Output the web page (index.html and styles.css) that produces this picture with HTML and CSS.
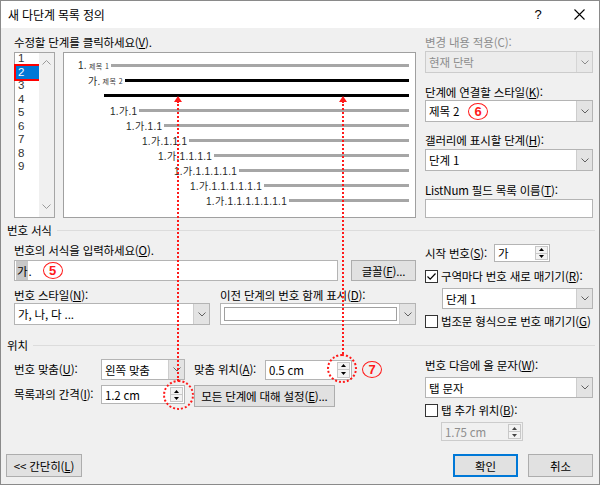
FILE: index.html
```html
<!DOCTYPE html>
<html lang="ko">
<head>
<meta charset="utf-8">
<title>새 다단계 목록 정의</title>
<link rel="stylesheet" href="styles.css">
</head>
<body>
<div class="dialog">
  <div class="titlebar">
    <span class="title">새 다단계 목록 정의</span>
    <span class="tb-help">?</span>
    <span class="tb-close"><svg width="11" height="11" viewBox="0 0 11 11"><path d="M0.5 0.5 L10.5 10.5 M10.5 0.5 L0.5 10.5" stroke="#000" stroke-width="1.1" fill="none"/></svg></span>
  </div>

  <div class="content">
    <div class="cols top">
      <div class="col">
        <div class="lbl">수정할 단계를 클릭하세요(<u>V</u>).</div>
        <div class="levels-row">
          <div class="listbox">
            <ul class="items">
              <li>1</li>
              <li class="sel">2</li>
              <li>3</li>
              <li>4</li>
              <li>5</li>
              <li>6</li>
              <li>7</li>
              <li>8</li>
              <li>9</li>
            </ul>
            <div class="vscroll">
              <svg width="9" height="5" viewBox="0 0 9 5"><polyline points="0.5,4.5 4.5,0.5 8.5,4.5" fill="none" stroke="#9a9a9a" stroke-width="1"/></svg>
              <svg width="9" height="5" viewBox="0 0 9 5"><polyline points="0.5,0.5 4.5,4.5 8.5,0.5" fill="none" stroke="#9a9a9a" stroke-width="1"/></svg>
            </div>
          </div>
          <div class="preview">
            <div class="prow r1"><span class="num">1.</span><span class="tiny">제목 1</span><span class="bar"></span></div>
            <div class="prow r2"><span class="num">가.</span><span class="tiny">제목 2</span><span class="bar dark"></span></div>
            <div class="prow r3"><span class="bar dark"></span></div>
            <div class="prow r4"><span class="num">1.가.1</span><span class="bar"></span></div>
            <div class="prow r5"><span class="num">1.가.1.1</span><span class="bar"></span></div>
            <div class="prow r6"><span class="num">1.가.1.1.1</span><span class="bar"></span></div>
            <div class="prow r7"><span class="num">1.가.1.1.1.1</span><span class="bar"></span></div>
            <div class="prow r8"><span class="num">1.가.1.1.1.1.1</span><span class="bar"></span></div>
            <div class="prow r9"><span class="num">1.가.1.1.1.1.1.1</span><span class="bar"></span></div>
            <div class="prow r10"><span class="num">1.가.1.1.1.1.1.1.1</span><span class="bar"></span></div>
          </div>
        </div>
      </div>

      <div class="col">
        <div class="lbl disabled">변경 내용 적용(C):</div>
        <div class="combo disabled m1">
          <span class="val">현재 단락</span>
          <span class="arrow"><svg width="8" height="5" viewBox="0 0 8 5"><polyline points="0.5,0.5 4,4 7.5,0.5" fill="none" stroke="#8a8a8a" stroke-width="1"/></svg></span>
        </div>
        <div class="lbl m11">단계에 연결할 스타일(<u>K</u>):</div>
        <div class="combo">
          <span class="val">제목 2<span class="badge b6">6</span></span>
          <span class="arrow"><svg width="8" height="5" viewBox="0 0 8 5"><polyline points="0.5,0.5 4,4 7.5,0.5" fill="none" stroke="#606060" stroke-width="1"/></svg></span>
        </div>
        <div class="lbl m10">갤러리에 표시할 단계(<u>H</u>):</div>
        <div class="combo m1">
          <span class="val">단계 1</span>
          <span class="arrow"><svg width="8" height="5" viewBox="0 0 8 5"><polyline points="0.5,0.5 4,4 7.5,0.5" fill="none" stroke="#606060" stroke-width="1"/></svg></span>
        </div>
        <div class="lbl m11">ListNum 필드 목록 이름(<u>T</u>):</div>
        <div class="textbox m1 h19"></div>
      </div>
    </div>

    <div class="group-head g1"><span>번호 서식</span><i></i></div>

    <div class="cols fmt">
      <div class="col">
        <div class="lbl m4">번호의 서식을 입력하세요(<u>O</u>).</div>
        <div class="fmt-row">
          <div class="textbox fmt-input"><span class="hl">가</span>.<span class="badge b5">5</span></div>
          <button class="btn font-btn">글꼴(<u>F</u>)...</button>
        </div>
        <div class="two-labels">
          <div class="lbl">번호 스타일(<u>N</u>):</div>
          <div class="lbl">이전 단계의 번호 함께 표시(<u>D</u>):</div>
        </div>
        <div class="two-combos">
          <div class="combo">
            <span class="val">가, 나, 다 ...</span>
            <span class="arrow"><svg width="8" height="5" viewBox="0 0 8 5"><polyline points="0.5,0.5 4,4 7.5,0.5" fill="none" stroke="#606060" stroke-width="1"/></svg></span>
          </div>
          <div class="combo">
            <span class="val"><span class="inner"></span></span>
            <span class="arrow"><svg width="8" height="5" viewBox="0 0 8 5"><polyline points="0.5,0.5 4,4 7.5,0.5" fill="none" stroke="#606060" stroke-width="1"/></svg></span>
          </div>
        </div>
      </div>

      <div class="col">
        <div class="start-row">
          <span class="lbl start-lbl">시작 번호(<u>S</u>):</span>
          <div class="spin start-spin">
            <span class="val">가</span>
            <span class="btns">
              <span class="sb"><svg width="5" height="3" viewBox="0 0 5 3"><polygon points="2.5,0 5,3 0,3" fill="#000"/></svg></span>
              <span class="sb"><svg width="5" height="3" viewBox="0 0 5 3"><polygon points="0,0 5,0 2.5,3" fill="#000"/></svg></span>
            </span>
          </div>
        </div>
        <div class="check-row m6">
          <span class="cb"><svg width="11" height="11" viewBox="0 0 11 11"><polyline points="1.5,5.5 4.2,8.2 9.5,2.5" fill="none" stroke="#000" stroke-width="1.2"/></svg></span>
          <span>구역마다 번호 새로 매기기(<u>R</u>):</span>
        </div>
        <div class="combo h21 m4 indent">
          <span class="val">단계 1</span>
          <span class="arrow"><svg width="8" height="5" viewBox="0 0 8 5"><polyline points="0.5,0.5 4,4 7.5,0.5" fill="none" stroke="#606060" stroke-width="1"/></svg></span>
        </div>
        <div class="check-row m4">
          <span class="cb"></span>
          <span>법조문 형식으로 번호 매기기(<u>G</u>)</span>
        </div>
      </div>
    </div>

    <div class="group-head g2"><span>위치</span><i></i></div>

    <div class="cols pos">
      <div class="col">
        <div class="pos-row1">
          <span class="lbl plabel">번호 맞춤(<u>U</u>):</span>
          <div class="combo h21 align-combo">
            <span class="val">왼쪽 맞춤</span>
            <span class="arrow"><svg width="8" height="5" viewBox="0 0 8 5"><polyline points="0.5,0.5 4,4 7.5,0.5" fill="none" stroke="#606060" stroke-width="1"/></svg></span>
          </div>
          <span class="lbl plabel2">맞춤 위치(<u>A</u>):</span>
          <div class="spin h20 pos-spin">
            <span class="val">0.5 cm</span>
            <span class="btns">
              <span class="sb"><svg width="5" height="3" viewBox="0 0 5 3"><polygon points="2.5,0 5,3 0,3" fill="#000"/></svg></span>
              <span class="sb"><svg width="5" height="3" viewBox="0 0 5 3"><polygon points="0,0 5,0 2.5,3" fill="#000"/></svg></span>
            </span>
          </div>
          <span class="badge b7">7</span>
        </div>
        <div class="pos-row2">
          <span class="lbl plabel">목록과의 간격(<u>I</u>):</span>
          <div class="spin h19 gap-spin">
            <span class="val">1.2 cm</span>
            <span class="btns">
              <span class="sb"><svg width="5" height="3" viewBox="0 0 5 3"><polygon points="2.5,0 5,3 0,3" fill="#000"/></svg></span>
              <span class="sb"><svg width="5" height="3" viewBox="0 0 5 3"><polygon points="0,0 5,0 2.5,3" fill="#000"/></svg></span>
            </span>
          </div>
          <button class="btn all-btn">모든 단계에 대해 설정(<u>E</u>)...</button>
        </div>
      </div>

      <div class="col">
        <div class="lbl m4">번호 다음에 올 문자(<u>W</u>):</div>
        <div class="combo h21 m4">
          <span class="val">탭 문자</span>
          <span class="arrow"><svg width="8" height="5" viewBox="0 0 8 5"><polyline points="0.5,0.5 4,4 7.5,0.5" fill="none" stroke="#606060" stroke-width="1"/></svg></span>
        </div>
        <div class="check-row m4">
          <span class="cb"></span>
          <span>탭 추가 위치(<u>B</u>):</span>
        </div>
        <div class="spin h19 m4 disabled tab-spin">
          <span class="val">1.75 cm</span>
          <span class="btns">
            <span class="sb"><svg width="5" height="3" viewBox="0 0 5 3"><polygon points="2.5,0 5,3 0,3" fill="#000"/></svg></span>
            <span class="sb"><svg width="5" height="3" viewBox="0 0 5 3"><polygon points="0,0 5,0 2.5,3" fill="#000"/></svg></span>
          </span>
        </div>
      </div>
    </div>

    <div class="footer">
      <button class="btn less-btn">&lt;&lt; 간단히(<u>L</u>)</button>
      <button class="btn ok-btn">확인</button>
      <button class="btn cancel-btn">취소</button>
    </div>
  </div>

  <span class="anno-line line-a"></span>
  <span class="anno-head head-a"></span>
  <span class="anno-circle circle-a"></span>
  <span class="anno-line line-b"></span>
  <span class="anno-head head-b"></span>
  <span class="anno-circle circle-b"></span>
</div>
</body>
</html>
```

FILE: styles.css
```css
* { box-sizing: border-box; }

body {
  margin: 0;
  background: #f0f0f0;
}

/* base button */
.btn {
  font-family: inherit;
  font-size: inherit;
  letter-spacing: inherit;
  color: #000;
  background: #e1e1e1;
  border: 1px solid #adadad;
  padding: 0;
  margin: 0;
  white-space: nowrap;
}

.dialog {
  position: relative;
  width: 600px;
  height: 485px;
  border: 1px solid #8a8a8a;
  background: #f0f0f0;
  display: flex;
  flex-direction: column;
  overflow: hidden;
  font-family: "Noto Sans CJK KR", "Noto Sans", sans-serif;
  font-size: 11.5px;
  letter-spacing: -0.15px;
  color: #000;
}

u { text-decoration: underline; text-underline-offset: 1px; }

/* title bar */
.titlebar {
  height: 27px;
  background: #fff;
  display: flex;
  align-items: center;
  padding-left: 7px;
  flex: none;
}
.title { flex: 1; font-size: 12px; }
.tb-help {
  width: 42px;
  text-align: center;
  font-family: "Liberation Sans", sans-serif;
  font-size: 13px;
}
.tb-close {
  width: 40px;
  display: flex;
  justify-content: center;
  align-items: center;
}

/* content */
.content {
  flex: 1;
  display: flex;
  flex-direction: column;
  padding: 6px 6px 7px 13px;
}

.cols {
  display: grid;
  grid-template-columns: 402px 168px;
  column-gap: 9px;
}
.col { display: flex; flex-direction: column; }

.lbl {
  line-height: 16px;
  height: 16px;
  white-space: nowrap;
}
.lbl.disabled { color: #8d8d8d; }

.m1 { margin-top: 1px; }
.m4 { margin-top: 4px; }
.m6 { margin-top: 6px; }
.m10 { margin-top: 10px; }
.m11 { margin-top: 11px; }

/* level list */
.levels-row {
  display: flex;
  gap: 8px;
  margin-top: 2px;
}
.listbox {
  width: 41px;
  height: 166px;
  background: #fff;
  border: 1px solid #a5a5a5;
  display: flex;
}
.items {
  list-style: none;
  margin: -1px 0 0 1px;
  padding: 0;
  width: 23px;
  font-family: "Liberation Sans", sans-serif;
  font-size: 11.5px;
  letter-spacing: 0;
  color: #333;
  flex: none;
}
.items li {
  height: 13.5px;
  line-height: 13.5px;
  padding-left: 2px;
}
.items li.sel {
  background: #0078d7;
  color: #fff;
  outline: 2px solid #ff0000;
}
.vscroll {
  margin-left: auto;
  width: 15px;
  flex: none;
  background: #f0f0f0;
  display: flex;
  flex-direction: column;
  justify-content: space-between;
  align-items: center;
  padding: 7px 0 8px;
}

.preview {
  width: 353px;
  height: 166px;
  background: #fff;
  border: 1px solid #a0a0a0;
  padding: 5px 6px 0 0;
}
.prow {
  height: 15px;
  display: flex;
  align-items: center;
}
.num {
  font-family: "Liberation Sans", "Noto Sans CJK KR", sans-serif;
  font-size: 10px;
  letter-spacing: 0.3px;
  color: #282828;
  white-space: nowrap;
}
.tiny {
  font-size: 7px;
  letter-spacing: 0.4px;
  color: #404040;
  margin-left: 2px;
  white-space: nowrap;
}
.bar {
  flex: 1;
  height: 3px;
  background: #a6a6a6;
  margin-left: 2px;
}
.bar.dark { background: #000; }
.r1 { padding-left: 14px; }
.r2 { padding-left: 24px; }
.r3 { padding-left: 38px; }
.r4 { padding-left: 46px; }
.r5 { padding-left: 62px; }
.r6 { padding-left: 78px; }
.r7 { padding-left: 94px; }
.r8 { padding-left: 110px; }
.r9 { padding-left: 126px; }
.r10 { padding-left: 142px; }

/* combo box */
.combo {
  display: flex;
  height: 22px;
  background: #fff;
  border: 1px solid #b4b4b4;
}
.combo.h21 { height: 21px; }
.combo .val {
  flex: 1;
  display: flex;
  align-items: center;
  padding-left: 3px;
  white-space: nowrap;
}
.combo .arrow {
  width: 16px;
  background: #e3e3e3;
  border-left: 1px solid #cdcdcd;
  display: flex;
  align-items: center;
  justify-content: center;
}
.combo.disabled {
  background: #ececec;
  border-color: #cccccc;
  color: #8d8d8d;
}
.combo.disabled .arrow { background: #e8e8e8; border-left-color: #d5d5d5; }
.combo .inner {
  flex: 1;
  height: 14px;
  border: 1px solid #a0a0a0;
  margin-right: 2px;
}

.textbox {
  background: #fff;
  border: 1px solid #b4b4b4;
}
.h19 { height: 19px; }

/* group headers */
.group-head {
  display: flex;
  align-items: center;
  margin-left: -7px;
  margin-right: -2px;
  height: 16px;
  line-height: 16px;
}
.group-head i {
  flex: 1;
  height: 1px;
  background: #dcdcdc;
  margin-left: 5px;
}
.g1 { margin-top: 4px; }
.g2 { margin-top: 8px; }

/* number format */
.fmt-row {
  display: flex;
  margin-top: 2px;
  height: 21px;
}
.fmt-input {
  width: 324px;
  display: flex;
  align-items: center;
  padding-left: 1px;
}
.hl {
  background: #c8c8c8;
  height: 100%;
  display: flex;
  align-items: center;
  padding: 0 1px;
}
.btn.font-btn {
  width: 65px;
  margin-left: 13px;
}
.two-labels, .two-combos {
  display: grid;
  grid-template-columns: 196px 196px;
  column-gap: 10px;
}
.two-labels { margin-top: 6px; }

/* spin */
.spin {
  display: flex;
  background: #fff;
  border: 1px solid #b4b4b4;
}
.spin .val {
  flex: 1;
  display: flex;
  align-items: center;
  padding-left: 3px;
  white-space: nowrap;
}
.spin .btns {
  width: 14px;
  display: flex;
  flex-direction: column;
  padding: 1px 1px 1px 0;
}
.spin .sb {
  flex: 1;
  border: 1px solid #c8c8c8;
  background: #f3f3f3;
  display: flex;
  align-items: center;
  justify-content: center;
}
.spin .sb + .sb { border-top: none; }
.spin.disabled { background: #f0f0f0; border-color: #cccccc; color: #8d8d8d; }
.spin.disabled .sb svg polygon { fill: #444; }
.h20 { height: 20px; }

.start-row {
  display: flex;
  align-items: center;
  height: 18px;
  margin-top: 6px;
}
.start-lbl { width: 69px; line-height: 18px; height: 18px; }
.start-spin { width: 56px; height: 18px; }

.check-row {
  display: flex;
  align-items: center;
  height: 16px;
  white-space: nowrap;
}
.cb {
  width: 13px;
  height: 13px;
  border: 1px solid #333;
  background: #fff;
  margin-right: 3px;
  display: flex;
  align-items: center;
  justify-content: center;
  flex: none;
}
.indent { margin-left: 17px; }

/* position */
.pos-row1 {
  display: flex;
  align-items: center;
  height: 21px;
  margin-top: 6px;
}
.plabel { width: 87px; line-height: 21px; height: 21px; }
.align-combo { width: 84px; }
.plabel2 { width: 71px; margin-left: 9px; line-height: 21px; height: 21px; }
.pos-spin { width: 87px; }
.pos-row2 {
  display: flex;
  align-items: flex-start;
  margin-top: 5px;
}
.pos-row2 .plabel { line-height: 19px; height: 19px; }
.gap-spin { width: 84px; }
.btn.all-btn { width: 141px; height: 22px; margin-left: 9px; }
.tab-spin { width: 82px; margin-left: 16px; }

/* footer */
.footer {
  margin-top: auto;
  margin-left: -8px;
  display: flex;
  height: 23px;
}
.btn.less-btn { width: 76px; }
.btn.ok-btn {
  width: 65px;
  margin-left: auto;
  border: 1px solid #0078d7;
  box-shadow: inset 0 0 0 1px #0078d7;
}
.btn.cancel-btn { width: 65px; margin-left: 10px; }

/* red annotation badges */
.badge {
  display: inline-flex;
  align-items: center;
  justify-content: center;
  width: 20px;
  height: 17px;
  border: 1.5px solid #ff1a1a;
  border-radius: 50%;
  color: #ff1a1a;
  font-family: "Liberation Sans", sans-serif;
  font-weight: bold;
  font-size: 13px;
  letter-spacing: 0;
  flex: none;
}
.b5 { margin-left: 11px; }
.b6 { margin-left: 9px; }
.b7 { margin-left: 10px; }

/* dotted pointer overlays */
.anno-line {
  position: absolute;
  width: 0;
  border-left: 2px dotted #ff1a1a;
}
.line-a { left: 176px; top: 100px; height: 280px; }
.line-b { left: 341px; top: 100px; height: 253px; }
.anno-head {
  position: absolute;
  width: 0;
  height: 0;
  border-left: 4px solid transparent;
  border-right: 4px solid transparent;
  border-bottom: 6px solid #ff1a1a;
}
.head-a { left: 173px; top: 95px; }
.head-b { left: 338px; top: 95px; }
.anno-circle {
  position: absolute;
  border: 2px dotted #ff1a1a;
  border-radius: 50%;
}
.circle-a { left: 162px; top: 379px; width: 31px; height: 30px; }
.circle-b { left: 326px; top: 353px; width: 30px; height: 29px; }
```
